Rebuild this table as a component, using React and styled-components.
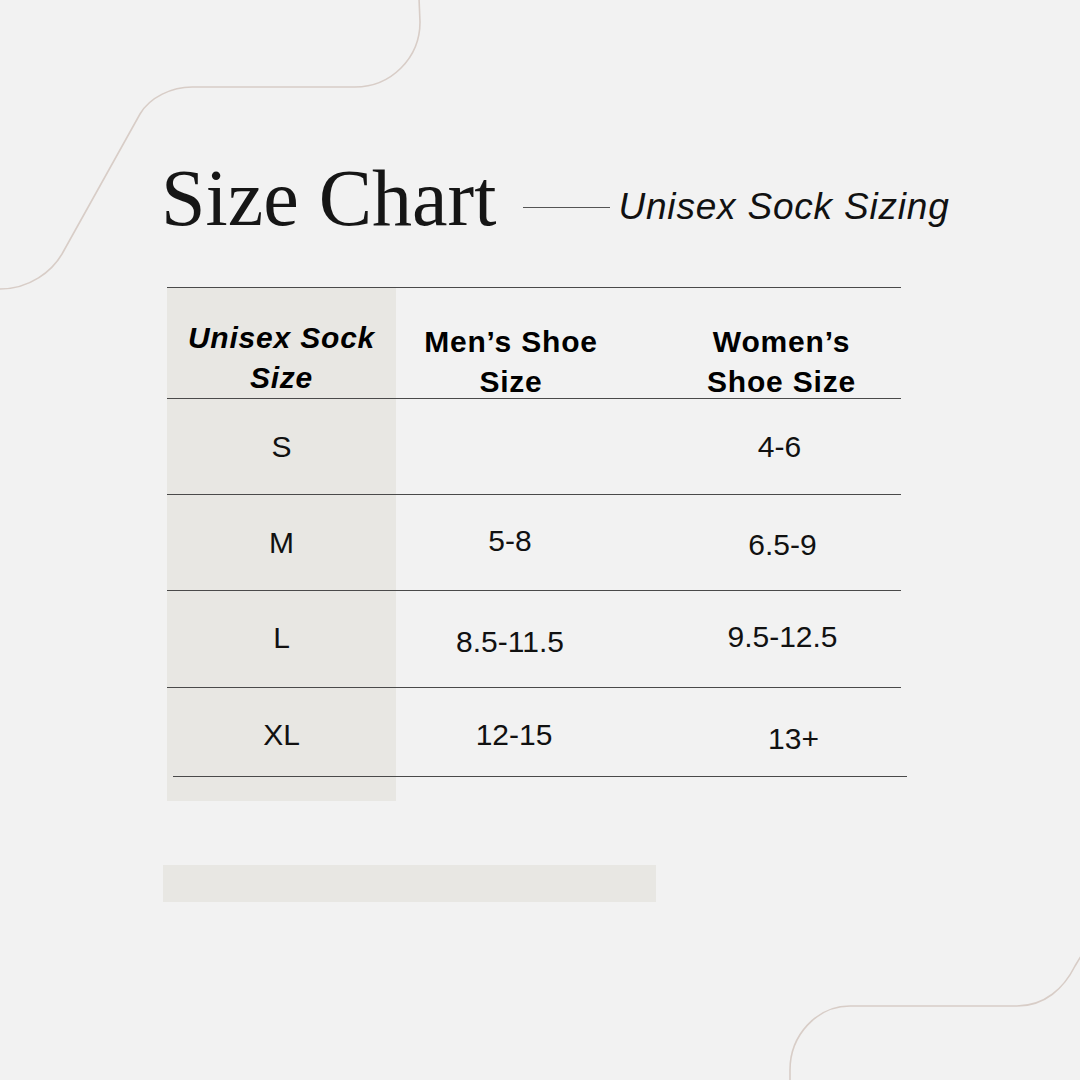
import React from 'react';
import styled, { createGlobalStyle } from 'styled-components'

const GlobalStyle = createGlobalStyle`
body {
    margin:0;
    background:#f2f2f2;
}
* {
    box-sizing:border-box;
}
`

const Page = styled.div`
position:relative;
width:1080px;
height:1080px;
overflow:hidden;
background-color:#f2f2f2;
padding:158px 0 0 161px;
`

const Decor = styled.svg`
position:absolute;
left:0;
top:0;
width:1080px;
height:1080px;
pointer-events:none;
`

const Content = styled.div`
position:relative;
`

const TitleRow = styled.div`
display:flex;
align-items:flex-start;
`

const Title = styled.h1`
margin:0;
font-family:"Liberation Serif", "DejaVu Serif", serif;
font-weight:400;
font-size:80px;
line-height:80px;
color:#161616;
`

const Rule = styled.div`
width:87px;
height:1px;
background-color:#555;
margin:49px 0 0 27px;
`

const Subtitle = styled.p`
margin:30px 0 0 8px;
font-family:"Liberation Sans", Arial, sans-serif;
font-style:italic;
font-size:37px;
line-height:37px;
letter-spacing:0.8px;
color:#111;
`

const Table = styled.div`
width:734px;
margin:49px 0 0 6px;
border-top:1px solid #4a4a4a;
padding-bottom:24px;
background:linear-gradient(to right, #e8e7e3 229px, transparent 229px);
`

const Row = styled.div`
display:grid;
grid-template-columns:229px 230px 275px;
height:${props => props.$height}px;
margin-right:${props => -props.$shift}px;
background:linear-gradient(#4a4a4a, #4a4a4a) no-repeat;
background-size:734px 1px;
background-position:${props => props.$shift}px 100%;
`

const HeadCell = styled.div`
padding-top:${props => props.$top}px;
padding-left:${props => props.$indent || 0}px;
font-family:"Liberation Sans", Arial, sans-serif;
font-weight:700;
font-style:${props => props.$italic ? 'italic' : 'normal'};
font-size:30px;
line-height:40px;
letter-spacing:0.8px;
text-align:center;
color:#000;
`

const Cell = styled.div`
display:flex;
align-items:center;
justify-content:center;
padding-left:${props => props.$indent || 0}px;
padding-bottom:1px;
font-family:"Liberation Sans", Arial, sans-serif;
font-size:30px;
color:#111;
transform:translate(${props => props.$dx || 0}px, ${props => props.$dy || 0}px);
`

const Bar = styled.div`
width:493px;
height:37px;
margin:64px 0 0 2px;
background-color:#e8e7e3;
`

const rows = [
    { h: 96, shift: 0, cells: [['S'], [''], ['4-6', -2, 0]] },
    { h: 96, shift: 0, cells: [['M'], ['5-8', -1, -2], ['6.5-9', 1, 2]] },
    { h: 97, shift: 0, cells: [['L', 0, -1], ['8.5-11.5', -1, 3], ['9.5-12.5', 1, -2]] },
    { h: 89, shift: 6, cells: [['XL', 0, 3], ['12-15', 3, 3], ['13+', 12, 7]] },
]

const App = () => {
    return (
        <>
            <GlobalStyle />
            <Page>
                <Decor viewBox="0 0 1080 1080">
                    <path
                        d="M0,289 C30,289 52,271 62,254 L140,114 C150,97 172,87 192,87 L355,87 C391,87 420,58 420,22 L419,-2"
                        fill="none" stroke="#d8cdc7" strokeWidth="1.6" />
                    <path
                        d="M1086,948 L1075,966 C1064,988 1045,1006 1017,1006 L850,1006 C817,1006 790,1035 790,1070 L790,1082"
                        fill="none" stroke="#d8cdc7" strokeWidth="1.6" />
                </Decor>
                <Content>
                    <TitleRow>
                        <Title>Size Chart</Title>
                        <Rule />
                        <Subtitle>Unisex Sock Sizing</Subtitle>
                    </TitleRow>
                    <Table>
                        <Row $height={111} $shift={0}>
                            <HeadCell $top={30} $italic>Unisex Sock<br />Size</HeadCell>
                            <HeadCell $top={34}>Men’s Shoe<br />Size</HeadCell>
                            <HeadCell $top={34} $indent={36}>Women’s<br />Shoe Size</HeadCell>
                        </Row>
                        {rows.map((r, i) => (
                            <Row key={i} $height={r.h} $shift={r.shift}>
                                {r.cells.map((c, j) => (
                                    <Cell key={j} $dx={c[1]} $dy={c[2]} $indent={j === 2 ? 36 : 0}>{c[0]}</Cell>
                                ))}
                            </Row>
                        ))}
                    </Table>
                    <Bar />
                </Content>
            </Page>
        </>
    )
}
export default App;
